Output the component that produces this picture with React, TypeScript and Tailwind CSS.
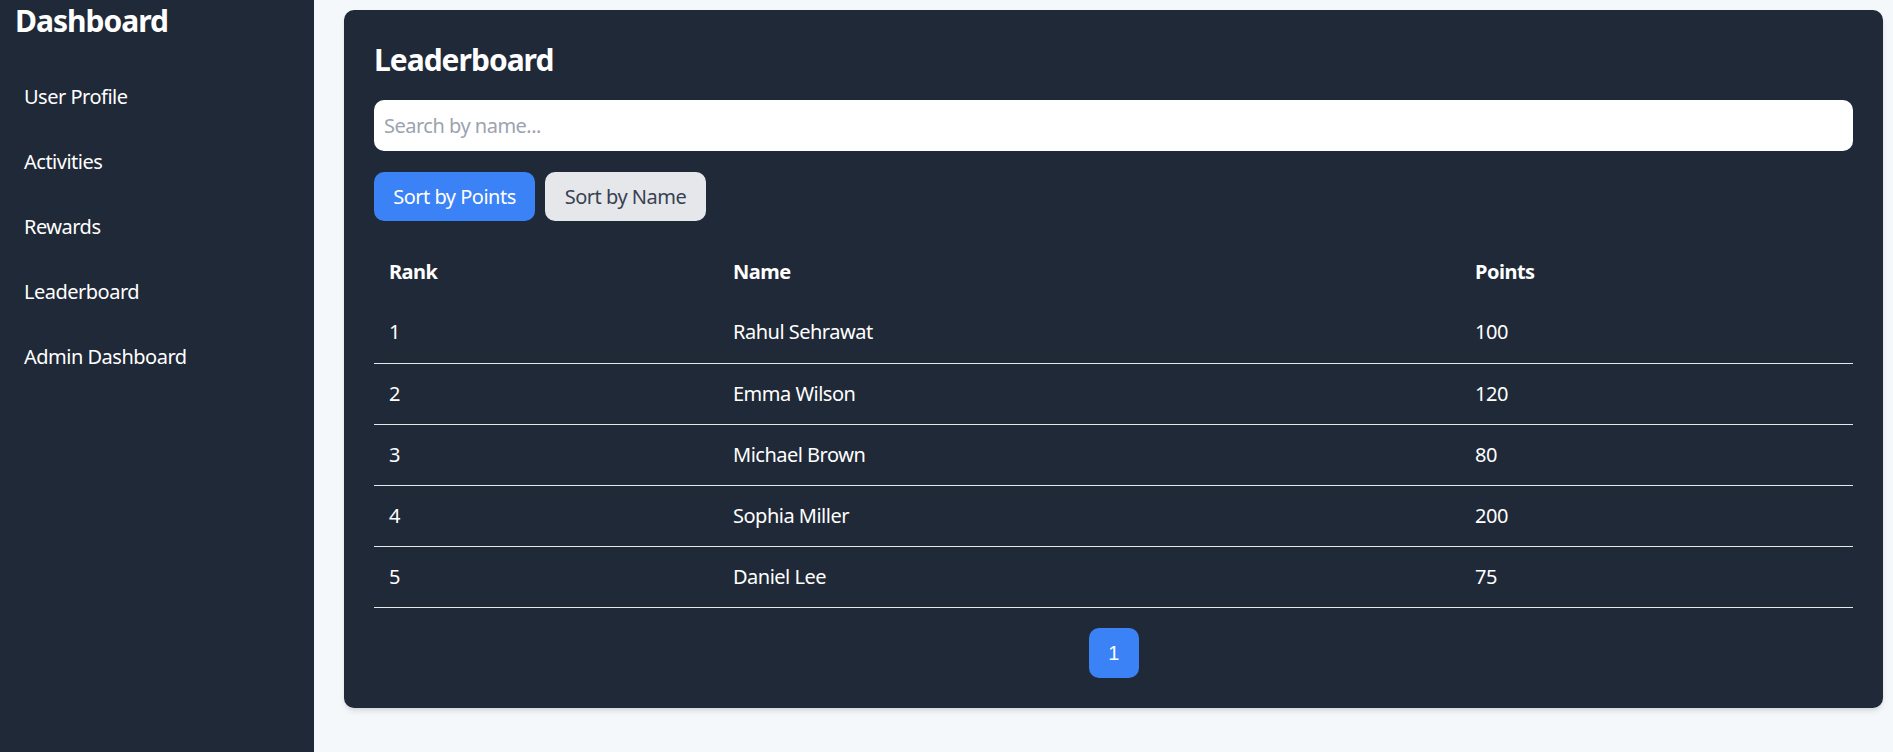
import { useState } from 'react';

type Player = { rank: number; name: string; points: number };

const players: Player[] = [
  { rank: 1, name: 'Rahul Sehrawat', points: 100 },
  { rank: 2, name: 'Emma Wilson', points: 120 },
  { rank: 3, name: 'Michael Brown', points: 80 },
  { rank: 4, name: 'Sophia Miller', points: 200 },
  { rank: 5, name: 'Daniel Lee', points: 75 },
];

const navItems = ['User Profile', 'Activities', 'Rewards', 'Leaderboard', 'Admin Dashboard'];

export default function App() {
  const [query, setQuery] = useState('');
  const rows = players.filter((p) => p.name.toLowerCase().includes(query.toLowerCase()));

  return (
    <div className="flex min-h-screen bg-[#f5f8fb] font-['Noto_Sans',sans-serif] tracking-[-0.5px] text-white">
      <aside className="w-[314px] shrink-0 bg-[#1f2937]">
        <h2 className="h-[64px] px-[15px] pt-[2px] text-[30px] font-bold leading-[38px] tracking-[-1px]">Dashboard</h2>
        <ul>
          {navItems.map((item) => (
            <li key={item} className="flex h-[65px] items-center px-[24px] text-[20px]">
              {item}
            </li>
          ))}
        </ul>
      </aside>

      <main className="flex-1 pl-[30px] pr-[10px] pt-[10px]">
        <div className="rounded-[10px] bg-[#1f2937] p-[30px] shadow-md">
          <h1 className="mb-[20px] text-[30px] font-bold leading-[40px] tracking-[-1px]">Leaderboard</h1>
          <input
            value={query}
            onChange={(e) => setQuery(e.target.value)}
            placeholder="Search by name..."
            className="mb-[21px] block h-[51px] w-full rounded-[10px] bg-white px-[10px] text-[20px] text-gray-800 placeholder:text-[#9ca3af] outline-none"
          />
          <div className="flex gap-[10px]">
            <button className="h-[49px] w-[161px] rounded-[10px] bg-[#3b82f6] text-[20px] text-white">Sort by Points</button>
            <button className="h-[49px] w-[161px] rounded-[10px] bg-[#e5e7eb] text-[20px] text-[#374151]">Sort by Name</button>
          </div>

          <table className="mt-[21px] w-full table-fixed border-collapse text-left text-[20px]">
            <colgroup>
              <col className="w-[344px]" />
              <col className="w-[742px]" />
              <col />
            </colgroup>
            <thead>
              <tr className="h-[60px]">
                <th className="px-[15px] font-bold">Rank</th>
                <th className="px-[15px] font-bold">Name</th>
                <th className="px-[15px] font-bold">Points</th>
              </tr>
            </thead>
            <tbody>
              {rows.map((p) => (
                <tr key={p.rank} className="h-[61px] border-b border-[#e5e7eb]">
                  <td className="px-[15px]">{p.rank}</td>
                  <td className="px-[15px]">{p.name}</td>
                  <td className="px-[15px]">{p.points}</td>
                </tr>
              ))}
            </tbody>
          </table>

          <div className="mt-[20px] flex justify-center">
            <button className="h-[50px] w-[50px] rounded-[10px] bg-[#3b82f6] font-['Liberation_Sans',sans-serif] text-[20px] text-white">1</button>
          </div>
        </div>
      </main>
    </div>
  );
}
